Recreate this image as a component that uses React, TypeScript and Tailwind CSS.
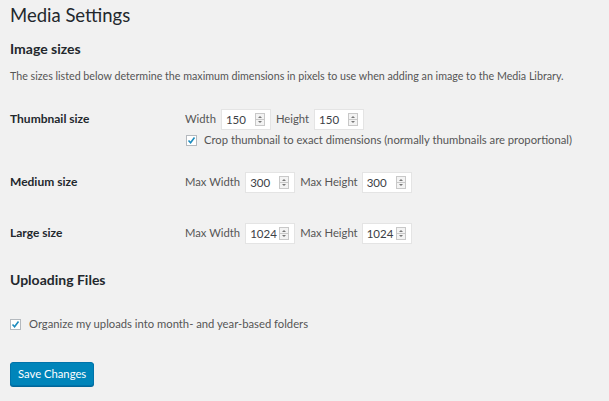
import React from "react";

const font = { fontFamily: 'Lato, "Open Sans", sans-serif' };

function Spinner() {
  return (
    <svg width="10" height="13" viewBox="0 0 10 13" className="shrink-0">
      <rect x="0.5" y="0.5" width="9" height="12" fill="#f3f3f3" stroke="#c8c8c8" />
      <line x1="1" y1="6.5" x2="9" y2="6.5" stroke="#c8c8c8" />
      <path d="M3 5 L5 3 L7 5 Z" fill="#777" />
      <path d="M3 8 L5 10 L7 8 Z" fill="#777" />
    </svg>
  );
}

function NumInput({ value }: { value: string }) {
  return (
    <div className="flex h-[21px] w-[50px] items-center justify-between border border-[#e4e4e4] bg-white pl-[4px] pr-[5px] text-[11.5px] text-[#3c4146]">
      <span>{value}</span>
      <Spinner />
    </div>
  );
}

function Check() {
  return (
    <div className="flex h-[11px] w-[11px] items-center justify-center border border-[#b4b9be] bg-white shrink-0">
      <svg width="9" height="9" viewBox="0 0 9 9">
        <path d="M1.5 4.5 L3.6 6.8 L7.5 1.5" fill="none" stroke="#1e8cbe" strokeWidth="1.6" />
      </svg>
    </div>
  );
}

export default function App() {
  return (
    <div className="h-[401px] w-[609px] overflow-hidden whitespace-nowrap bg-[#f1f1f1] pl-[10px] text-[#555]" style={font}>
      <h1 className="pt-[2px] text-[18.5px] leading-[26px] text-[#23282d]">Media Settings</h1>
      <h2 className="mt-[11px] text-[14px] font-bold leading-[20px] text-[#23282d]">Image sizes</h2>
      <p className="mt-[9px] text-[10.7px] leading-[16px]">
        The sizes listed below determine the maximum dimensions in pixels to use when adding an image to the Media Library.
      </p>

      <div className="mt-[25px] flex">
        <div className="w-[175px] pt-[1px] text-[12px] font-bold leading-[18px] text-[#23282d]">Thumbnail size</div>
        <div className="flex flex-col">
          <div className="flex items-center text-[11.25px]">
            <span className="mr-[5px]">Width</span>
            <NumInput value="150" />
            <span className="ml-[5px] mr-[5px]">Height</span>
            <NumInput value="150" />
          </div>
          <div className="mt-[2px] flex items-center text-[11.25px]">
            <div className="ml-[1px]"><Check /></div>
            <span className="ml-[7px]">Crop thumbnail to exact dimensions (normally thumbnails are proportional)</span>
          </div>
        </div>
      </div>

      <div className="mt-[23px] flex items-center">
        <div className="w-[175px] text-[12px] font-bold leading-[18px] text-[#23282d]">Medium size</div>
        <div className="flex items-center text-[11.25px]">
          <span className="mr-[5px]">Max Width</span>
          <NumInput value="300" />
          <span className="ml-[5px] mr-[4px]">Max Height</span>
          <NumInput value="300" />
        </div>
      </div>

      <div className="mt-[30px] flex items-center">
        <div className="w-[175px] text-[12px] font-bold leading-[18px] text-[#23282d]">Large size</div>
        <div className="flex items-center text-[11.25px]">
          <span className="mr-[5px]">Max Width</span>
          <NumInput value="1024" />
          <span className="ml-[5px] mr-[4px]">Max Height</span>
          <NumInput value="1024" />
        </div>
      </div>

      <h2 className="mt-[26px] text-[14px] font-bold leading-[20px] text-[#23282d]">Uploading Files</h2>

      <div className="mt-[26px] flex items-center text-[11.25px]">
        <Check />
        <span className="ml-[8px]">Organize my uploads into month- and year-based folders</span>
      </div>

      <button className="mt-[29px] h-[24px] rounded-[3px] border border-[#0073aa] bg-[#0085ba] px-[7px] text-[11.25px] leading-[20px] text-white shadow-[0_1px_0_#006799]">
        Save Changes
      </button>
    </div>
  );
}
